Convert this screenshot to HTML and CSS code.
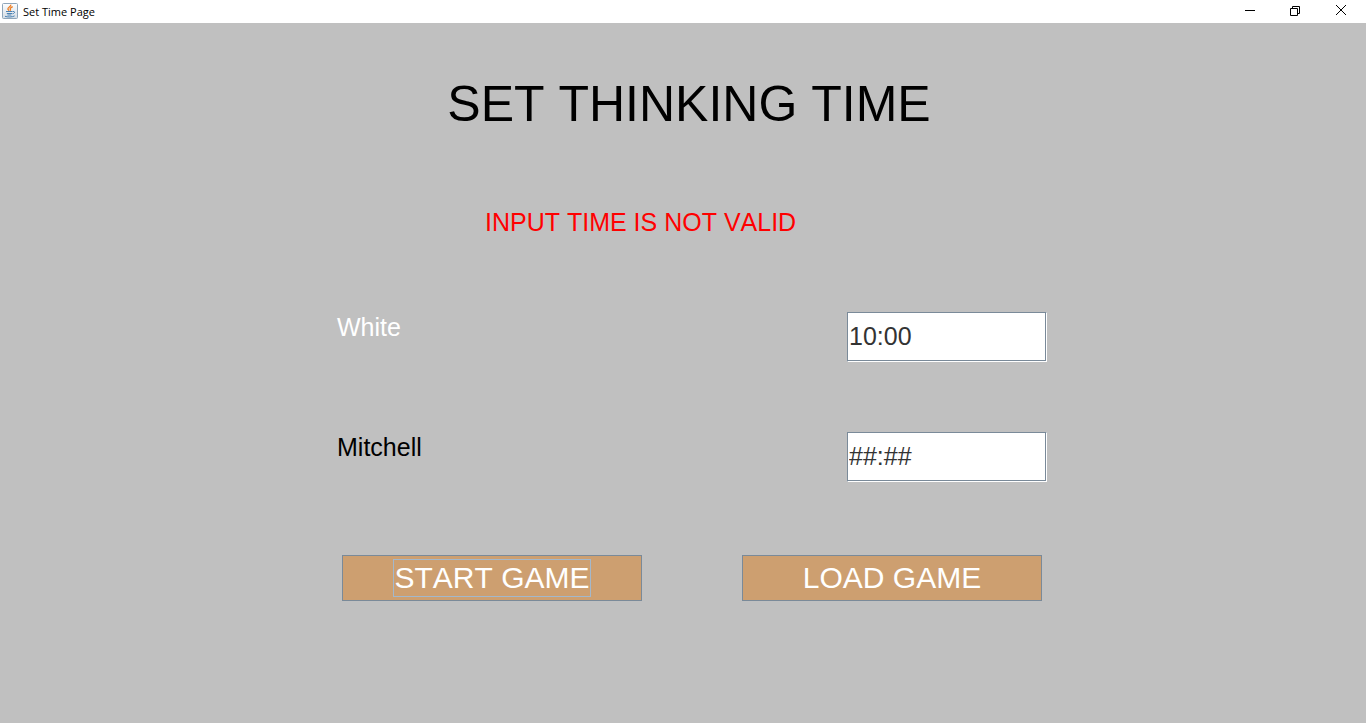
FILE: index.html
```html
<!DOCTYPE html>
<html lang="en">
<head>
<meta charset="utf-8">
<title>Set Time Page</title>
<link rel="stylesheet" href="styles.css">
</head>
<body>
<header class="titlebar">
  <svg class="app-icon" width="16" height="16" viewBox="0 0 16 16" aria-hidden="true">
    <defs>
      <linearGradient id="tile" x1="0" y1="0" x2="0" y2="1">
        <stop offset="0" stop-color="#fdfeff"/>
        <stop offset="1" stop-color="#d3dce4"/>
      </linearGradient>
    </defs>
    <rect x="0.5" y="0.5" width="15" height="15" rx="1" fill="url(#tile)" stroke="#8fa6ba"/>
    <path d="M8.800 1.600C9.400 3.600 5.400 4.200 5.900 6c.2.7.8 1 1.100 1.800M10.700 3.700C8.800 4.600 7.700 5.300 8.300 6.200c.4.6.3 1-.2 1.500" fill="none" stroke="#ee7d22" stroke-width="1.300"/>
    <path d="M4 8.500h6.500M4.800 10.500h5.400M3 13.300c2.400 1 7.500.9 9.600-.4M10.800 8.500c2.500-.5 2.300 1.800-.2 2.300M5.400 12h4" fill="none" stroke="#3a76ad" stroke-width="0.900"/>
  </svg>
  <span class="window-title">Set Time Page</span>
  <div class="window-controls">
    <button class="window-button" type="button" aria-label="Minimize">
      <svg width="12" height="12" viewBox="0 0 12 12"><path d="M2 5.500h10" fill="none" stroke="#000"/></svg>
    </button>
    <button class="window-button" type="button" aria-label="Restore">
      <svg width="12" height="12" viewBox="0 0 12 12"><path d="M1.500 3.500h7v7h-7zM3.500 3.500v-2h7v7h-2" fill="none" stroke="#000"/></svg>
    </button>
    <button class="window-button" type="button" aria-label="Close">
      <svg width="12" height="12" viewBox="0 0 12 12"><path d="M1 0l10 10M11 0L1 10" fill="none" stroke="#000"/></svg>
    </button>
  </div>
</header>
<main class="page">
  <h1 class="heading">SET THINKING TIME</h1>
  <form class="time-form">
    <p class="error" role="alert">INPUT TIME IS NOT VALID</p>
    <div class="player">
      <label class="player-name player-name-white" for="white-time">White</label>
      <input class="time-field" id="white-time" type="text" value="10:00">
    </div>
    <div class="player">
      <label class="player-name" for="black-time">Mitchell</label>
      <input class="time-field" id="black-time" type="text" value="##:##">
    </div>
    <div class="actions">
      <button class="action" type="button"><span class="action-label action-label-focused">START GAME</span></button>
      <button class="action" type="button"><span class="action-label">LOAD GAME</span></button>
    </div>
  </form>
</main>
</body>
</html>
```
FILE: styles.css
```css
* {
  box-sizing: border-box;
}

body {
  display: flex;
  flex-direction: column;
  min-height: 100vh;
  margin: 0;
  background: #c0c0c0;
  font-family: "Liberation Sans", Arial, sans-serif;
  font-kerning: none;
  color: #000;
}

.titlebar {
  display: flex;
  align-items: center;
  height: 23px;
  padding: 0 0 1px 2px;
  background: #fff;
}

.app-icon {
  margin-right: 5px;
}

.window-title {
  padding-top: 1px;
  font: 11px/16px "Open Sans", "Noto Sans", sans-serif;
}

.window-controls {
  display: flex;
  align-self: stretch;
  margin-left: auto;
}

.window-button {
  display: flex;
  align-items: center;
  justify-content: center;
  width: 46px;
  padding: 0 4px 0 0;
  border: 0;
  background: transparent;
}

.page {
  display: flex;
  flex: 1;
  flex-direction: column;
  align-items: center;
  padding: 51px 0 0 12px;
}

.heading {
  margin: 0;
  font-size: 50px;
  font-weight: normal;
  line-height: 60px;
}

.time-form {
  width: 100%;
  max-width: 716px;
  padding: 73px 0 0 6px;
}

.error {
  margin: 0 0 75px;
  padding-left: 148px;
  font-size: 25px;
  line-height: 30px;
  color: #f00;
}

.player {
  display: flex;
  align-items: flex-start;
  justify-content: space-between;
  margin-bottom: 70px;
}

.player-name {
  font-size: 25px;
  line-height: 30px;
}

.player-name-white {
  color: #fff;
}

.time-field {
  width: 200px;
  height: 50px;
  padding: 0 1px 2px;
  border: 1px solid #7a8a99;
  border-right-color: #fff;
  border-bottom-color: #fff;
  background: #fff;
  box-shadow: inset -1px -1px #7a8a99;
  font: inherit;
  font-size: 25px;
  color: #333;
}

.actions {
  display: flex;
  justify-content: space-between;
  padding: 3px 5px 0;
}

.action {
  display: flex;
  align-items: center;
  justify-content: center;
  width: 300px;
  height: 46px;
  padding: 0;
  border: 1px solid #7a8a99;
  background: #cd9f70;
  font: inherit;
  font-size: 30px;
  color: #fff;
}

.action-label {
  border: 1px solid transparent;
  line-height: 36px;
}

.action-label-focused {
  border-color: #a3b8cc;
}
```
